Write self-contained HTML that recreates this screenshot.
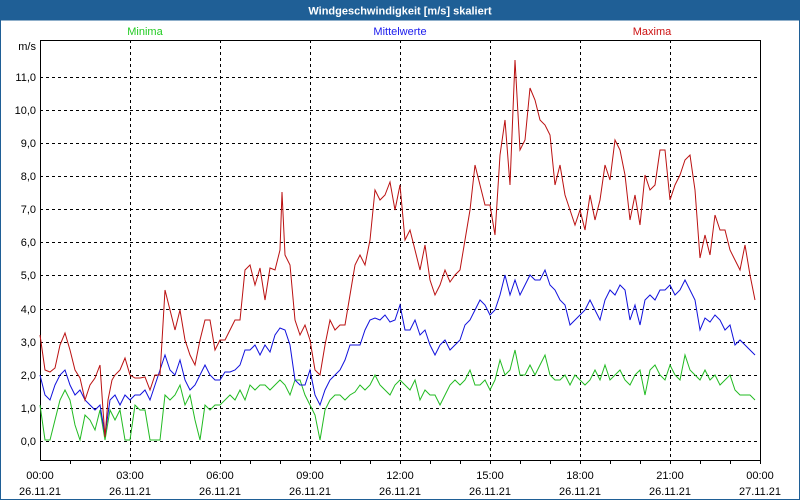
<!DOCTYPE html>
<html><head><meta charset="utf-8"><style>
html,body{margin:0;padding:0;width:800px;height:500px;overflow:hidden;background:#fff}
svg{display:block}
text{font-family:"Liberation Sans",sans-serif;font-size:11px}
</style></head><body>
<svg width="800" height="500" viewBox="0 0 800 500">
<rect x="0" y="0" width="800" height="500" fill="#fff"/>
<rect x="0" y="0" width="800" height="20" fill="#1f5f96"/>
<rect x="0.5" y="20" width="799" height="479.5" fill="none" stroke="#1f5f96" stroke-width="1"/>
<text x="400" y="14.5" text-anchor="middle" fill="#fff" font-weight="bold" font-size="11.5">Windgeschwindigkeit [m/s] skaliert</text>
<text x="145" y="35" text-anchor="middle" fill="#22cc22">Minima</text>
<text x="400" y="35" text-anchor="middle" fill="#1a1aee">Mittelwerte</text>
<text x="652" y="35" text-anchor="middle" fill="#cc1111">Maxima</text>
<text x="36" y="50" text-anchor="end" fill="#000">m/s</text>
<g fill="#000" text-anchor="end">
<text x="36" y="445">0,0</text><text x="36" y="412">1,0</text><text x="36" y="379">2,0</text><text x="36" y="346">3,0</text><text x="36" y="313">4,0</text><text x="36" y="279">5,0</text><text x="36" y="246">6,0</text><text x="36" y="213">7,0</text><text x="36" y="180">8,0</text><text x="36" y="147">9,0</text><text x="36" y="114">10,0</text><text x="36" y="81">11,0</text>
</g>
<g stroke="#000" stroke-width="1" stroke-dasharray="3,3" fill="none">
<path d="M40 441.5H760M40 408.5H760M40 375.5H760M40 342.5H760M40 309.5H760M40 275.5H760M40 242.5H760M40 209.5H760M40 176.5H760M40 143.5H760M40 110.5H760M40 77.5H760"/>
<path d="M130.5 40V460M220.5 40V460M310.5 40V460M400.5 40V460M490.5 40V460M580.5 40V460M670.5 40V460"/>
</g>
<rect x="40.5" y="40.5" width="720" height="420" fill="none" stroke="#000"/>
<g stroke="#000"><path d="M70.5 460v4M100.5 460v4M130.5 460v4M160.5 460v4M190.5 460v4M220.5 460v4M250.5 460v4M280.5 460v4M310.5 460v4M340.5 460v4M370.5 460v4M400.5 460v4M430.5 460v4M460.5 460v4M490.5 460v4M520.5 460v4M550.5 460v4M580.5 460v4M610.5 460v4M640.5 460v4M670.5 460v4M700.5 460v4M730.5 460v4M760.5 460v4"/></g>
<g fill="#000" text-anchor="middle">
<text x="40" y="479">00:00</text><text x="40" y="495">26.11.21</text>
<text x="130" y="479">03:00</text><text x="130" y="495">26.11.21</text>
<text x="220" y="479">06:00</text><text x="220" y="495">26.11.21</text>
<text x="310" y="479">09:00</text><text x="310" y="495">26.11.21</text>
<text x="400" y="479">12:00</text><text x="400" y="495">26.11.21</text>
<text x="490" y="479">15:00</text><text x="490" y="495">26.11.21</text>
<text x="580" y="479">18:00</text><text x="580" y="495">26.11.21</text>
<text x="670" y="479">21:00</text><text x="670" y="495">26.11.21</text>
<text x="760" y="479">00:00</text><text x="760" y="495">27.11.21</text>
</g>
<polyline fill="none" stroke="#22bb22" stroke-width="1" points="40,405 45,440 50,440 55,420 60,400 65,390 70,400 75,425 80,440 85,415 90,420 95,430 100,410 105,440 110,410 115,420 120,410 125,440 130,440 135,405 140,410 145,410 150,440 155,440 160,440 165,395 170,400 175,395 180,385 185,405 190,395 195,420 200,440 205,405 210,410 215,405 220,405 225,400 230,395 235,400 240,390 245,400 250,385 255,390 260,385 265,385 270,390 275,385 280,380 285,385 290,395 295,380 300,380 305,395 310,405 315,415 320,440 325,410 330,400 335,395 340,395 345,400 350,395 355,392 360,385 365,390 370,385 375,375 380,385 385,390 390,395 395,385 400,380 405,385 410,390 415,380 420,400 425,390 430,395 435,395 440,405 445,395 450,385 455,380 460,385 465,380 470,370 475,385 480,385 485,380 490,390 495,380 500,360 505,375 510,370 515,350 520,375 525,375 530,365 535,375 540,365 545,355 550,375 555,380 560,380 565,375 570,385 575,375 580,380 585,385 590,380 595,370 600,380 605,365 610,380 615,375 620,370 625,380 630,385 635,375 640,370 645,395 650,370 655,365 660,375 665,380 670,365 675,375 680,380 685,355 690,370 695,375 700,380 705,370 710,380 715,375 720,385 725,380 730,375 735,390 740,395 745,395 750,395 755,400"/>
<polyline fill="none" stroke="#1111dd" stroke-width="1" points="40,375 45,395 50,400 55,385 60,375 65,370 70,385 75,395 80,390 85,400 90,405 95,410 100,405 105,435 110,400 115,395 120,405 125,395 130,400 135,395 140,395 145,390 150,400 155,385 160,370 165,355 170,370 175,375 180,360 185,380 190,390 195,385 200,375 205,365 210,375 215,380 220,380 225,372 230,372 235,370 240,365 245,350 250,350 255,345 260,355 265,345 270,352 275,335 280,328 285,330 290,345 295,380 300,385 305,385 310,370 315,395 320,405 325,390 330,380 335,375 340,370 345,360 350,345 355,345 360,345 365,330 370,320 375,318 380,320 385,315 390,322 395,320 400,305 405,330 410,330 415,320 420,335 425,330 430,345 435,355 440,345 445,340 450,350 455,345 460,340 465,325 470,320 475,310 480,300 485,305 490,315 495,310 500,295 505,275 510,295 515,280 520,295 525,285 530,275 535,280 540,280 545,270 550,285 555,290 560,300 565,305 570,325 575,320 580,315 585,310 590,300 595,310 600,320 605,300 610,290 615,295 620,285 625,290 630,320 635,305 640,325 645,300 650,295 655,300 660,290 665,290 670,285 675,295 680,290 685,280 690,290 695,300 700,330 705,318 710,322 715,315 720,320 725,330 730,325 735,345 740,340 745,345 750,350 755,355"/>
<polyline fill="none" stroke="#bb1111" stroke-width="1" points="40,335 45,370 50,372 55,368 60,345 65,333 70,350 75,370 80,378 85,400 90,385 95,378 100,365 103,410 105,437 108,400 112,380 115,375 120,370 125,358 130,375 135,378 140,378 145,377 150,390 155,375 160,375 165,290 170,310 175,330 180,310 185,340 190,355 195,365 200,340 205,320 210,320 215,350 220,340 225,340 230,330 235,320 240,320 245,270 250,265 255,285 260,268 265,300 270,268 275,270 280,250 282,192 285,255 290,265 295,320 300,335 305,325 310,340 315,370 320,375 325,345 330,320 335,330 340,325 345,325 350,295 355,265 360,255 365,265 370,240 375,190 380,200 385,195 390,182 395,210 400,185 405,240 410,230 415,250 420,270 425,245 430,280 435,295 440,285 445,270 450,282 455,275 460,270 465,240 470,210 475,165 480,185 485,205 490,205 495,235 500,155 505,120 510,185 515,60 520,150 525,140 530,88 535,100 540,120 545,125 550,135 555,185 560,165 565,195 570,210 575,225 580,210 585,230 590,195 595,220 600,200 605,165 610,180 615,140 620,150 625,175 630,220 635,195 640,225 645,175 650,190 655,185 660,150 665,150 670,200 675,185 680,175 685,160 690,155 695,190 700,258 705,235 710,255 715,215 720,230 725,230 730,250 735,260 740,270 745,245 750,275 755,300"/>
</svg>
</body></html>
